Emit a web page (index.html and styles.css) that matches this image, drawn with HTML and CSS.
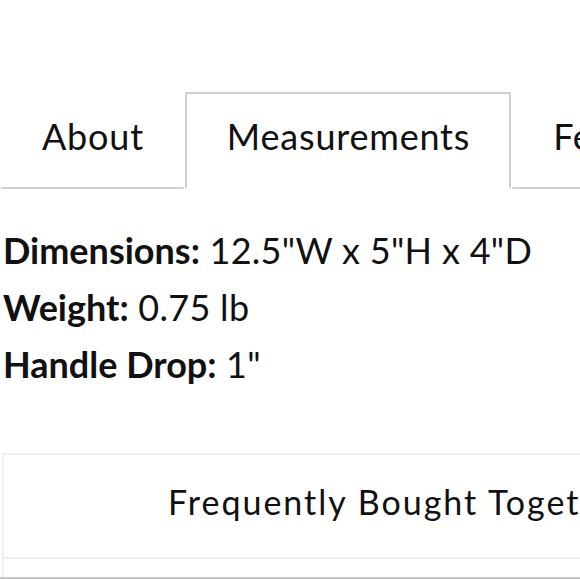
FILE: index.html
```html
<!DOCTYPE html>
<html lang="en">
<head>
<meta charset="utf-8">
<title>Measurements</title>
<link rel="stylesheet" href="styles.css">
</head>
<body>
<div class="page">
  <nav class="tabs">
    <div class="tab">About</div>
    <div class="tab active">Measurements</div>
    <div class="tab">Features</div>
  </nav>
  <div class="specs">
    <div class="spec"><span class="label">Dimensions:</span> 12.5"W x 5"H x 4"D</div>
    <div class="spec"><span class="label">Weight:</span> 0.75 lb</div>
    <div class="spec"><span class="label">Handle Drop:</span> 1"</div>
  </div>
  <section class="fbt">
    <div class="fbt-head">Frequently Bought Together</div>
    <div class="fbt-body"></div>
  </section>
  <div class="bottom-rule"></div>
</div>
</body>
</html>
```

FILE: styles.css
```css
html, body {
  margin: 0;
  padding: 0;
  background: #fff;
}
body {
  font-family: Lato, "Noto Sans", sans-serif;
  color: #111;
  overflow: hidden;
}
.page {
  width: 580px;
  height: 579px;
  overflow: hidden;
}
.tabs {
  display: flex;
  margin-top: 92px;
  white-space: nowrap;
}
.tab {
  flex: none;
  font-size: 36px;
  letter-spacing: 0.8px;
  line-height: 85px;
  padding: 0 39px 8px 40px;
  border: 2px solid transparent;
  border-bottom-color: #cfcfcf;
}
.tab.active {
  border-color: #cfcfcf;
  border-bottom-color: transparent;
}
.specs {
  margin-top: 33px;
  padding-left: 3px;
}
.spec {
  font-size: 36px;
  line-height: 57px;
  letter-spacing: 0.3px;
  white-space: nowrap;
}
.label {
  font-weight: 700;
  letter-spacing: 0;
}
.fbt {
  margin: 60px 0 0 2px;
  width: 900px;
  border: 2px solid #efefef;
  border-right: none;
  border-bottom: none;
}
.fbt-head {
  font-size: 34px;
  letter-spacing: 2px;
  line-height: 94px;
  padding: 0 0 8px 164px;
  border-bottom: 2px solid #efefef;
  white-space: nowrap;
}
.fbt-body {
  height: 18px;
}
.bottom-rule {
  border-top: 2px solid #c4c4c4;
}
```
